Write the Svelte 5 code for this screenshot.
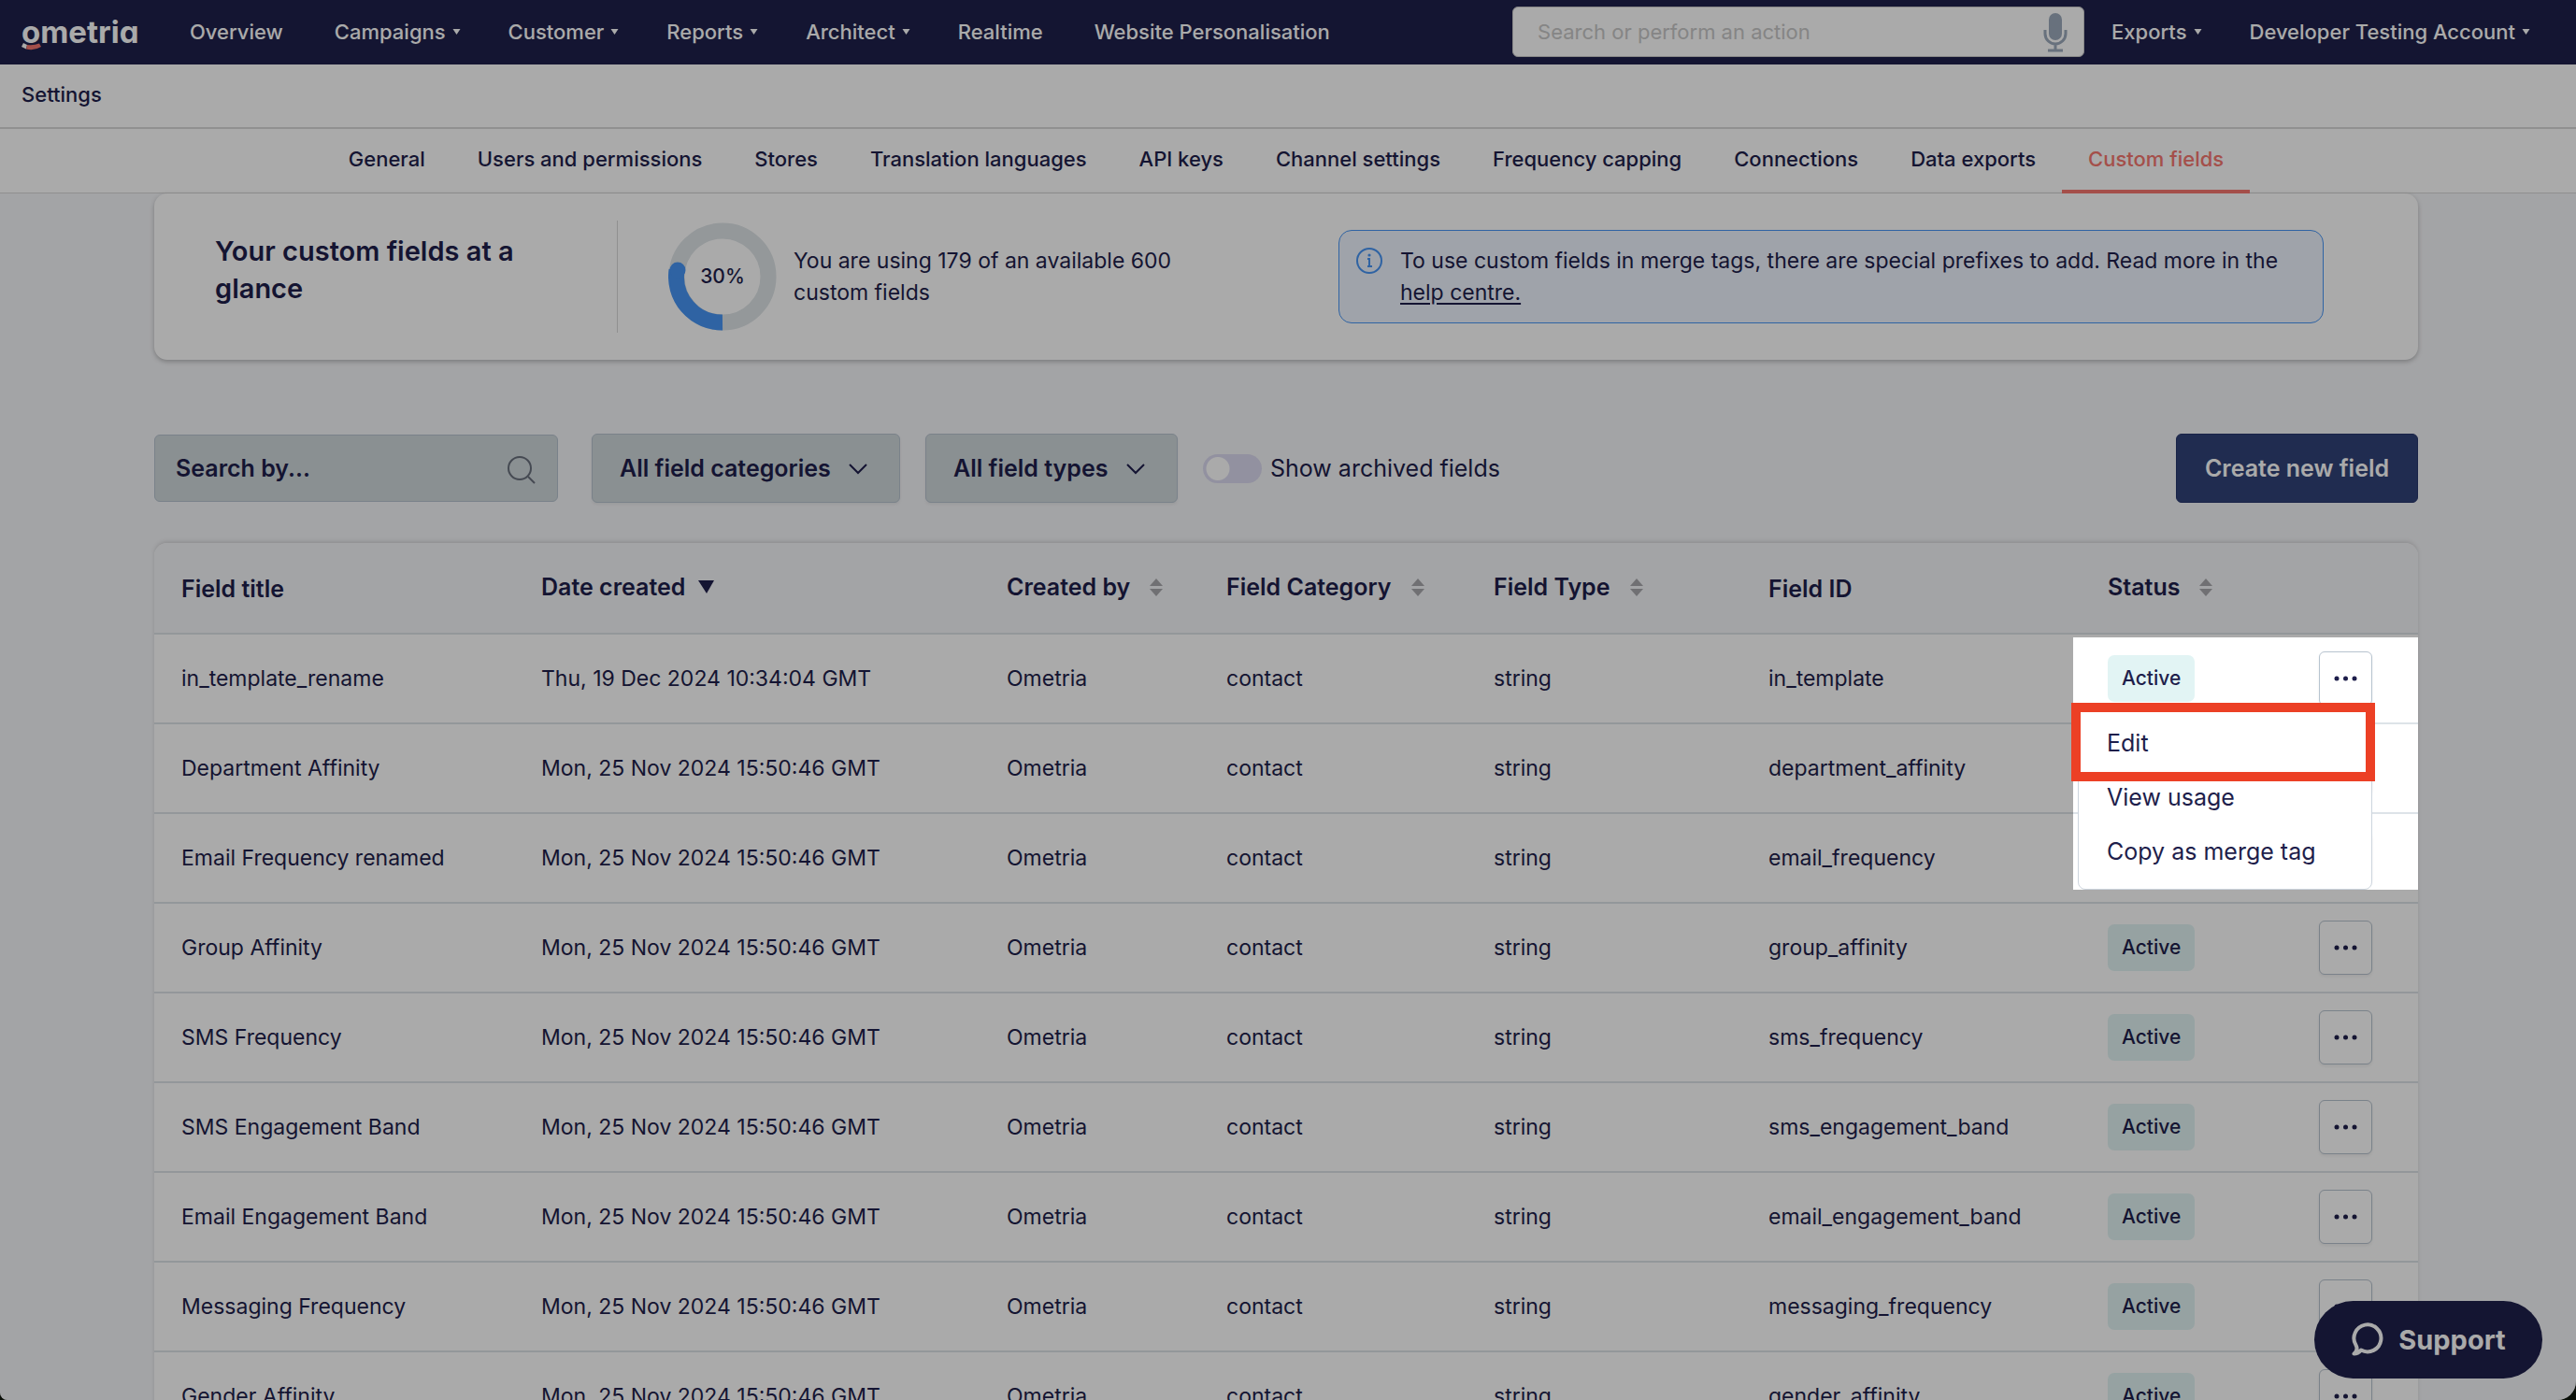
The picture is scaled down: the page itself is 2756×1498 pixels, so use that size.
<!--
  Settings > Custom fields
  Usage summary, filters and the field table, with the row menu walkthrough highlight.
-->
<script lang="ts">
  interface NavItem {
    label: string;
    menu?: boolean;
  }

  interface Column {
    label: string;
    width: number;
    sort?: 'none' | 'desc';
  }

  interface Field {
    title: string;
    created: string;
    id: string;
  }

  const nav: NavItem[] = [
    { label: 'Overview' },
    { label: 'Campaigns', menu: true },
    { label: 'Customer', menu: true },
    { label: 'Reports', menu: true },
    { label: 'Architect', menu: true },
    { label: 'Realtime' },
    { label: 'Website Personalisation' },
  ];

  const account: NavItem[] = [
    { label: 'Exports', menu: true },
    { label: 'Developer Testing Account', menu: true },
  ];

  const tabs = [
    'General',
    'Users and permissions',
    'Stores',
    'Translation languages',
    'API keys',
    'Channel settings',
    'Frequency capping',
    'Connections',
    'Data exports',
    'Custom fields',
  ];

  const columns: Column[] = [
    { label: 'Field title', width: 385 },
    { label: 'Date created', width: 498, sort: 'desc' },
    { label: 'Created by', width: 235, sort: 'none' },
    { label: 'Field Category', width: 286, sort: 'none' },
    { label: 'Field Type', width: 294, sort: 'none' },
    { label: 'Field ID', width: 363 },
    { label: 'Status', width: 226, sort: 'none' },
    { label: '', width: 135 },
  ];

  const synced = 'Mon, 25 Nov 2024 15:50:46 GMT';

  const fields: Field[] = [
    { title: 'in_template_rename', created: 'Thu, 19 Dec 2024 10:34:04 GMT', id: 'in_template' },
    { title: 'Department Affinity', created: synced, id: 'department_affinity' },
    { title: 'Email Frequency renamed', created: synced, id: 'email_frequency' },
    { title: 'Group Affinity', created: synced, id: 'group_affinity' },
    { title: 'SMS Frequency', created: synced, id: 'sms_frequency' },
    { title: 'SMS Engagement Band', created: synced, id: 'sms_engagement_band' },
    { title: 'Email Engagement Band', created: synced, id: 'email_engagement_band' },
    { title: 'Messaging Frequency', created: synced, id: 'messaging_frequency' },
    { title: 'Gender Affinity', created: synced, id: 'gender_affinity' },
  ];

  let activeTab = $state('Custom fields');
  let openRow = $state('in_template');
  let showArchived = $state(false);

  function toggleMenu(id: string) {
    openRow = openRow === id ? '' : id;
  }
</script>

{#snippet navLink(item: NavItem)}
  <a class="nav-link" class:nav-link--plain={!item.menu} href="#top">
    {item.label}
    {#if item.menu}
      <svg class="caret" viewBox="0 0 8 6" aria-hidden="true"><path d="M0 0h8L4 6z" /></svg>
    {/if}
  </a>
{/snippet}

{#snippet chevron()}
  <svg class="chevron" viewBox="0 0 22 14" aria-hidden="true"><path d="M2 2l9 9 9-9" /></svg>
{/snippet}

<div class="page">
  <header class="topbar">
    <a class="logo" href="#top">
      ometria
      <svg class="smile" viewBox="0 0 21 8" aria-hidden="true">
        <path class="smile-light" d="M2 0L6 2L5 6.5L0 4z" />
        <path class="smile-red" d="M6 2Q13 3 19 0.5L21 4Q13 9 5 6.5z" />
      </svg>
    </a>
    <nav class="links" aria-label="Main">
      {#each nav as item}
        {@render navLink(item)}
      {/each}
    </nav>
    <div class="action-search">
      <input type="text" placeholder="Search or perform an action" aria-label="Search or perform an action" />
      <svg class="mic" viewBox="0 0 26 42" aria-hidden="true">
        <rect x="6" y="0" width="14" height="29" rx="7" />
        <path d="M2 18v4a11 11 0 0 0 22 0v-4M13 33v7M5 40h16" />
      </svg>
    </div>
    <nav class="links" aria-label="Account">
      {#each account as item}
        {@render navLink(item)}
      {/each}
    </nav>
  </header>

  <div class="crumb">Settings</div>

  <nav class="tabs" aria-label="Settings">
    {#each tabs as tab}
      <a
        class="tab"
        class:tab--active={tab === activeTab}
        href="#top"
        onclick={() => (activeTab = tab)}
      >{tab}</a>
    {/each}
  </nav>

  <main>
    <section class="summary">
      <h1>Your custom fields at a glance</h1>
      <div class="usage">
        <svg class="donut" viewBox="0 0 116 116" role="img" aria-label="30% used">
          <circle class="donut-track" cx="58" cy="58" r="49" />
          <path class="donut-value" d="M58 107A49 49 0 0 1 9 51" />
          <circle class="donut-cap" cx="10" cy="51" r="8.5" />
          <text x="58" y="65">30%</text>
        </svg>
        <p>You are using 179 of an available 600 custom fields</p>
      </div>
      <div class="info">
        <svg class="info-icon" viewBox="0 0 30 30" aria-hidden="true">
          <circle cx="15" cy="15" r="13" />
          <path d="M13 13h2v8M13 21h5" />
          <circle class="info-dot" cx="15" cy="9" r="1.6" />
        </svg>
        <p>
          To use custom fields in merge tags, there are special prefixes to add. Read more in the
          <a href="#help">help centre.</a>
        </p>
      </div>
    </section>

    <section class="filters">
      <div class="field-search">
        <input type="text" placeholder="Search by..." aria-label="Search by" />
        <svg viewBox="0 0 30 32" aria-hidden="true">
          <circle cx="13" cy="14" r="12" /><path d="M22 23l7 7" />
        </svg>
      </div>
      <div class="select select--category">
        <select aria-label="Field category"><option>All field categories</option></select>
        {@render chevron()}
      </div>
      <div class="select select--type">
        <select aria-label="Field type"><option>All field types</option></select>
        {@render chevron()}
      </div>
      <label class="archived">
        <input type="checkbox" role="switch" bind:checked={showArchived} />
        Show archived fields
      </label>
      <button type="button" class="create">Create new field</button>
    </section>

    <table>
      <colgroup>
        {#each columns as column}
          <col style="width: {column.width}px" />
        {/each}
      </colgroup>
      <thead>
        <tr>
          {#each columns as column}
            <th scope="col" aria-label={column.label || 'Actions'}>
              {#if column.sort}
                <button type="button" class="sort">
                  {column.label}
                  {#if column.sort === 'desc'}
                    <svg class="sort-desc" viewBox="0 0 17 14" aria-hidden="true"><path d="M0 0h17L9 14z" /></svg>
                  {:else}
                    <svg class="sort-none" viewBox="0 0 14 19" aria-hidden="true"><path d="M7 0l7 8H0zM0 11h14l-7 8z" /></svg>
                  {/if}
                </button>
              {:else}
                {column.label}
              {/if}
            </th>
          {/each}
        </tr>
      </thead>
      <tbody>
        {#each fields as field (field.id)}
          <tr>
            <td>{field.title}</td>
            <td>{field.created}</td>
            <td>Ometria</td>
            <td>contact</td>
            <td>string</td>
            <td>{field.id}</td>
            <td><span class="badge">Active</span></td>
            <td>
              <div class="actions">
                <button
                  type="button"
                  class="more"
                  aria-label="Actions for {field.title}"
                  aria-expanded={openRow === field.id}
                  onclick={() => toggleMenu(field.id)}
                >
                  <svg viewBox="0 0 50 12" aria-hidden="true">
                    <circle cx="6" cy="6" r="5" /><circle cx="25" cy="6" r="5" /><circle cx="44" cy="6" r="5" />
                  </svg>
                </button>
                {#if openRow === field.id}
                  <div class="menu">
                    <button type="button">Edit</button>
                    <button type="button">View usage</button>
                    <button type="button">Copy as merge tag</button>
                  </div>
                  <div class="spotlight"></div>
                  <div class="highlight"></div>
                {/if}
              </div>
            </td>
          </tr>
        {/each}
      </tbody>
    </table>
  </main>

  <button type="button" class="support">
    <svg viewBox="0 0 36 38" aria-hidden="true">
      <path d="M11 29.6A14.5 14.5 0 1 0 5.5 24.3C7.5 28 6.5 31 3.5 33.5C6.5 33.5 9 32 11 29.6z" />
    </svg>
    Support
  </button>
</div>

<style>
  :global(body) {
    margin: 0;
    background: #0a0f08;
  }

  .page {
    --ink: #1e1e4b;
    --navy: #1e204b;
    --line: #dde3e8;
    --blue: #4795f5;
    --coral: #f67770;
    position: relative;
    height: 100vh;
    overflow: hidden;
    border-radius: 0 0 20px 8px;
    background: #f5f6f9;
    color: var(--ink);
    font-family: Inter, sans-serif;
    font-size: 23px;
    line-height: 34px;
  }

  .page :global(*) {
    box-sizing: border-box;
  }

  svg {
    display: block;
    flex: none;
  }

  button,
  input,
  select {
    font: inherit;
    color: inherit;
  }

  button {
    cursor: pointer;
  }

  h1,
  p {
    margin: 0;
  }

  /* Top bar */
  .topbar {
    display: flex;
    align-items: center;
    height: 69px;
    padding: 0 49px 2px 23px;
    background: var(--navy);
    color: #fff;
  }

  .logo {
    position: relative;
    width: 180px;
    color: inherit;
    font-size: 33px;
    font-weight: 700;
    font-feature-settings: 'cv11';
    text-decoration: none;
  }

  .smile {
    position: absolute;
    left: 0;
    bottom: -3px;
    width: 21px;
    height: 8px;
  }

  .smile-light {
    fill: #fff;
  }

  .smile-red {
    fill: var(--coral);
  }

  .links {
    display: flex;
    gap: 51px;
  }

  .nav-link {
    display: flex;
    align-items: center;
    gap: 7px;
    color: inherit;
    font-size: 22px;
    font-weight: 500;
    line-height: 32px;
    text-decoration: none;
    white-space: nowrap;
  }

  .nav-link--plain {
    padding-right: 4px;
  }

  .caret {
    width: 9px;
    height: 6px;
    fill: currentColor;
  }

  .action-search {
    position: relative;
    width: 612px;
    margin: 0 29px 0 auto;
  }

  .action-search input {
    width: 100%;
    height: 54px;
    padding: 0 60px 0 26px;
    border: 1px solid #ccc;
    border-radius: 6px;
    background: #fff;
    font-size: 22px;
  }

  .action-search input::placeholder {
    color: #c8c8c8;
    opacity: 1;
  }

  .mic {
    position: absolute;
    top: 7px;
    right: 18px;
    width: 26px;
    height: 42px;
    fill: #9caabc;
  }

  .mic path {
    fill: none;
    stroke: #9caabc;
    stroke-width: 3;
  }

  .crumb {
    height: 69px;
    padding: 15px 23px;
    border-bottom: 2px solid #d8d8d8;
    background: #fff;
    font-size: 22px;
    font-weight: 500;
  }

  .tabs {
    display: flex;
    justify-content: center;
    height: 69px;
    padding-right: 4px;
    border-bottom: 1px solid #d8d8d8;
    background: #fff;
  }

  .tab {
    height: 69px;
    padding: 15px 28px;
    color: inherit;
    font-size: 22px;
    font-weight: 500;
    text-decoration: none;
    white-space: nowrap;
  }

  .tab--active {
    border-bottom: 4px solid var(--coral);
    color: var(--coral);
  }

  main {
    padding: 0 169px 0 165px;
  }

  /* Usage summary */
  .summary {
    display: flex;
    align-items: center;
    height: 178px;
    padding: 0 101px 0 65px;
    border-radius: 14px;
    background: #fff;
    box-shadow: 0 2px 5px rgba(0, 0, 0, 0.25);
  }

  h1 {
    width: 430px;
    padding-bottom: 14px;
    padding-right: 60px;
    font-size: 29px;
    font-weight: 600;
    line-height: 40px;
  }

  .usage {
    display: flex;
    align-items: center;
    gap: 18px;
    width: 640px;
    height: 120px;
    padding-left: 54px;
    border-left: 1px solid #d8d8d8;
  }

  .donut {
    width: 116px;
    height: 116px;
  }

  .donut-track,
  .donut-value {
    fill: none;
    stroke: #dee4e7;
    stroke-width: 17;
  }

  .donut-value {
    stroke: var(--blue);
  }

  .donut-cap {
    fill: var(--blue);
  }

  .donut text {
    fill: var(--ink);
    font-size: 21px;
    font-weight: 500;
    text-anchor: middle;
  }

  .info {
    display: flex;
    gap: 18px;
    width: 1054px;
    margin-left: auto;
    padding: 15px 17px;
    border: 1px solid var(--blue);
    border-radius: 14px;
    background: #eff5ff;
  }

  .info-icon {
    width: 30px;
    height: 30px;
    margin-top: 2px;
    fill: none;
    stroke: var(--blue);
    stroke-width: 2;
  }

  .info-dot {
    fill: var(--blue);
    stroke: none;
  }

  .info a {
    color: inherit;
    text-underline-offset: 3px;
  }

  /* Filters */
  .filters {
    display: flex;
    align-items: center;
    height: 74px;
    margin-top: 79px;
    font-size: 25px;
  }

  .field-search,
  .select {
    position: relative;
    font-weight: 600;
  }

  .field-search {
    width: 432px;
    margin-right: 36px;
  }

  .field-search input,
  select {
    width: 100%;
    border: 1px solid #b7c3cf;
    border-radius: 6px;
    background: #d0d8dc;
  }

  .field-search input {
    height: 72px;
    padding: 0 60px 0 22px;
  }

  .field-search input::placeholder {
    color: var(--ink);
    opacity: 1;
  }

  .field-search svg {
    position: absolute;
    top: 22px;
    right: 24px;
    width: 30px;
    height: 32px;
    fill: none;
    stroke: #686f7c;
    stroke-width: 2;
  }

  select {
    height: 74px;
    padding: 0 29px;
    appearance: none;
    box-shadow: 0 2px 3px rgba(0, 0, 0, 0.06);
  }

  .select--category {
    width: 330px;
    margin-right: 27px;
  }

  .select--type {
    width: 270px;
    margin-right: 27px;
  }

  .chevron {
    position: absolute;
    top: 31px;
    right: 34px;
    width: 22px;
    height: 14px;
    fill: none;
    stroke: var(--ink);
    stroke-width: 2;
    pointer-events: none;
  }

  .archived {
    display: flex;
    align-items: center;
    gap: 9px;
  }

  .archived input {
    width: 63px;
    height: 31px;
    margin: 0;
    border-radius: 16px;
    appearance: none;
    background: radial-gradient(circle at 16px 50%, #fff 12px, #dbdaf0 13px);
  }

  .archived input:checked {
    background: radial-gradient(circle at 47px 50%, #fff 12px, var(--blue) 13px);
  }

  .create {
    width: 259px;
    height: 74px;
    margin-left: auto;
    padding: 0;
    border: 1px solid #27366c;
    border-radius: 6px;
    background: #304278;
    color: #fff;
    font-weight: 600;
  }

  /* Field table */
  table {
    width: 100%;
    margin-top: 43px;
    border-radius: 14px 14px 0 0;
    border-spacing: 0;
    table-layout: fixed;
    background: #fff;
    box-shadow: 0 -2px 4px rgba(0, 0, 0, 0.12);
  }

  th {
    height: 98px;
    padding: 2px 29px 0;
    border-bottom: 2px solid var(--line);
    background: #f5f6f9;
    font-size: 25px;
    font-weight: 600;
    text-align: left;
    white-space: nowrap;
  }

  th:first-child {
    border-top-left-radius: 14px;
  }

  th:last-child {
    border-top-right-radius: 14px;
  }

  td {
    height: 96px;
    padding: 0 29px;
    border-bottom: 2px solid var(--line);
    white-space: nowrap;
  }

  .sort {
    display: flex;
    align-items: center;
    padding: 0 0 4px;
    border: 0;
    background: none;
  }

  .sort-desc {
    width: 17px;
    height: 14px;
    margin-left: 14px;
    fill: var(--ink);
  }

  .sort-none {
    width: 14px;
    height: 19px;
    margin-left: 21px;
    fill: #a9a9ad;
  }

  .badge {
    display: inline-block;
    padding: 8px 15px;
    border-radius: 7px;
    background: #e2f4f4;
    font-size: 21px;
    font-weight: 500;
  }

  .actions {
    position: relative;
    width: 57px;
  }

  .more {
    display: flex;
    align-items: center;
    justify-content: center;
    width: 57px;
    height: 58px;
    padding: 0;
    border: 1px solid #b7c3cf;
    border-radius: 6px;
    background: #fff;
    box-shadow: 0 2px 3px rgba(0, 0, 0, 0.06);
  }

  .more svg {
    width: 25px;
    height: 6px;
    fill: var(--ink);
  }

  .menu {
    position: absolute;
    z-index: 1;
    top: 61px;
    right: 0;
    display: flex;
    flex-direction: column;
    width: 315px;
    padding: 7px 0 11px;
    border: 1px solid #cdd5de;
    border-radius: 8px;
    background: #fff;
    font-size: 25px;
  }

  .menu button {
    height: 58px;
    padding: 0 30px;
    border: 0;
    background: none;
    text-align: left;
  }

  /* Dims everything but the open row menu */
  .spotlight {
    position: absolute;
    z-index: 3;
    top: -15px;
    right: -49px;
    width: 369px;
    height: 270px;
    box-shadow: 0 0 0 9999px rgba(0, 0, 0, 0.333);
    pointer-events: none;
  }

  .highlight {
    position: absolute;
    z-index: 4;
    top: 55px;
    right: -3px;
    width: 325px;
    height: 84px;
    border: 10px solid #ec4025;
    pointer-events: none;
  }

  .support {
    position: absolute;
    z-index: 2;
    right: 36px;
    bottom: 23px;
    display: flex;
    align-items: center;
    justify-content: center;
    gap: 15px;
    width: 244px;
    height: 83px;
    padding: 0;
    border: 0;
    border-radius: 42px;
    background: var(--navy);
    color: #fff;
    font-size: 29px;
    font-weight: 700;
  }

  .support svg {
    width: 36px;
    height: 38px;
    fill: none;
    stroke: currentColor;
    stroke-width: 4;
    stroke-linejoin: round;
  }
</style>
